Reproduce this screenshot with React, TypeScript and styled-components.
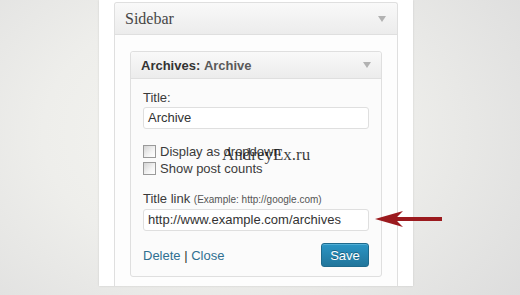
import React from 'react'
import styled, { createGlobalStyle } from 'styled-components'

const GlobalStyle = createGlobalStyle`
  html, body {
    margin: 0;
    padding: 0;
  }
  body {
    font-family: "Liberation Sans", Arial, sans-serif;
  }
`

const Page = styled.div`
  position: relative;
  width: 520px;
  height: 295px;
  overflow: hidden;
  display: flex;
  align-items: flex-start;
  padding-left: 99px;
  box-sizing: border-box;
  background: radial-gradient(ellipse 75% 95% at 42% 45%, #f5f5f1 0%, #eeeeeb 45%, #dcdcdc 100%);
`

const Column = styled.div`
  width: 314px;
  height: 286px;
  box-sizing: border-box;
  padding: 2px 15px 0 15px;
  background: #fff;
  box-shadow: 0 0 2px rgba(0, 0, 0, 0.12);
  display: flex;
`

const SidebarPanel = styled.div`
  flex: 1;
  display: flex;
  flex-direction: column;
  border: 1px solid #dfdfdf;
  border-bottom: none;
  border-radius: 3px 3px 0 0;
  background: #fdfdfd;
`

const PanelHeader = styled.div<{ $small?: boolean }>`
  display: flex;
  align-items: center;
  justify-content: space-between;
  height: ${p => (p.$small ? '26px' : '31px')};
  padding: ${p => (p.$small ? '0 10px 0 10px' : '0 11px 0 10px')};
  border-bottom: 1px solid #dfdfdf;
  background: linear-gradient(to bottom, #f9f9f9, #ececec);
  border-radius: 3px 3px 0 0;
`

const SidebarTitle = styled.span`
  font-family: "Liberation Serif", "Times New Roman", serif;
  font-size: 16px;
  color: #464646;
  padding-top: 1px;
`

const WidgetTitle = styled.span`
  font-size: 13px;
  font-weight: bold;
  color: #333;
  b {
    color: #5a5a5a;
  }
`

const Toggle = styled.span`
  width: 0;
  height: 0;
  border-left: 4px solid transparent;
  border-right: 4px solid transparent;
  border-top: 6px solid #b2b2b2;
`

const SidebarBody = styled.div`
  flex: 1;
  padding: 16px 15px 0 15px;
`

const Widget = styled.div`
  border: 1px solid #dfdfdf;
  border-radius: 3px;
  background: #fbfbfb;
  box-shadow: inset 0 1px 0 #fff;
`

const WidgetBody = styled.div`
  position: relative;
  padding: 10px 12px 9px 12px;
`

const Label = styled.div`
  font-size: 13px;
  line-height: 18px;
  color: #3a3a3a;
`

const Hint = styled.span`
  font-size: 10px;
  color: #555;
`

const TextInput = styled.div`
  height: 22px;
  box-sizing: border-box;
  border: 1px solid #dfdfdf;
  border-radius: 3px;
  background: #fff;
  padding: 0 4px;
  font-size: 13px;
  line-height: 20px;
  color: #333;
`

const CheckList = styled.div`
  margin: 14px 0 13px 0;
  display: flex;
  flex-direction: column;
`

const CheckRow = styled.div`
  display: flex;
  align-items: center;
  gap: 4px;
  height: 17px;
  font-size: 13px;
  color: #3a3a3a;
`

const Box = styled.span`
  width: 13px;
  height: 13px;
  box-sizing: border-box;
  border: 1px solid #9a9a9a;
  background: linear-gradient(135deg, #d4d4d4, #f4f4f4 60%, #fff);
`

const Actions = styled.div`
  display: flex;
  align-items: center;
  justify-content: space-between;
  margin-top: 12px;
`

const Links = styled.div`
  font-size: 13px;
  color: #333;
  a {
    color: #2f6f91;
    text-decoration: none;
  }
`

const SaveButton = styled.button`
  width: 48px;
  height: 24px;
  border: 1px solid #1e6a8d;
  border-radius: 3px;
  background: linear-gradient(to bottom, #2a95c5, #21759b);
  color: #fff;
  font-family: "Liberation Sans", Arial, sans-serif;
  font-size: 13px;
  padding: 0;
  text-shadow: 0 -1px 0 rgba(0, 0, 0, 0.3);
  box-shadow: inset 0 1px 0 rgba(120, 200, 230, 0.5);
`

const Watermark = styled.span`
  position: absolute;
  left: 91px;
  top: 66px;
  font-family: "Liberation Serif", "Times New Roman", serif;
  font-size: 17px;
  color: rgba(20, 20, 20, 0.85);
  pointer-events: none;
`

const Arrow = styled.svg`
  position: absolute;
  left: 372px;
  top: 208px;
`

export default function App() {
  return (
    <>
      <GlobalStyle />
      <Page>
        <Column>
          <SidebarPanel>
            <PanelHeader>
              <SidebarTitle>Sidebar</SidebarTitle>
              <Toggle />
            </PanelHeader>
            <SidebarBody>
              <Widget>
                <PanelHeader $small>
                  <WidgetTitle>
                    Archives: <b>Archive</b>
                  </WidgetTitle>
                  <Toggle />
                </PanelHeader>
                <WidgetBody>
                  <Label>Title:</Label>
                  <TextInput>Archive</TextInput>
                  <CheckList>
                    <CheckRow>
                      <Box />
                      Display as dropdown
                    </CheckRow>
                    <CheckRow>
                      <Box />
                      Show post counts
                    </CheckRow>
                  </CheckList>
                  <Label>
                    Title link <Hint>(Example: http://google.com)</Hint>
                  </Label>
                  <TextInput>http://www.example.com/archives</TextInput>
                  <Actions>
                    <Links>
                      <a>Delete</a> | <a>Close</a>
                    </Links>
                    <SaveButton>Save</SaveButton>
                  </Actions>
                  <Watermark>AndreyEx.ru</Watermark>
                </WidgetBody>
              </Widget>
            </SidebarBody>
          </SidebarPanel>
        </Column>
        <Arrow width="74" height="22" viewBox="0 0 74 22">
          <path d="M3 11 L31 3 L25 9 L70 9 L70 13 L25 13 L31 19 Z" fill="#9b1a1e" />
        </Arrow>
      </Page>
    </>
  )
}
